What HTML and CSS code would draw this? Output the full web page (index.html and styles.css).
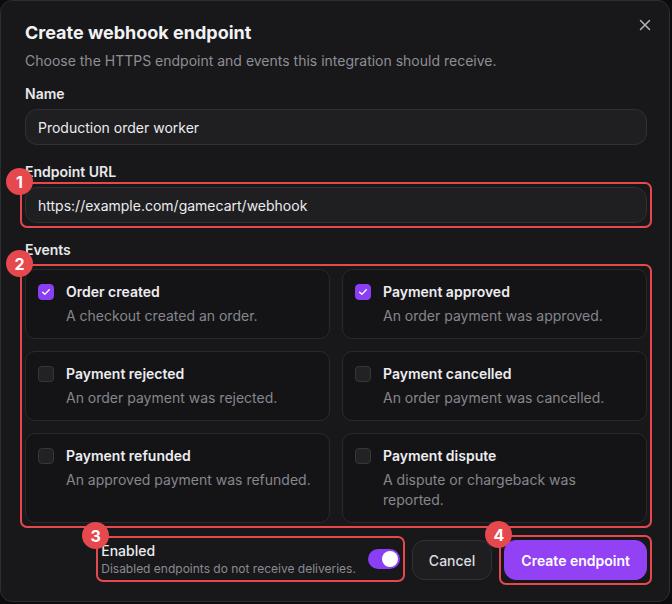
FILE: index.html
```html
<!DOCTYPE html>
<html lang="en">
<head>
<meta charset="utf-8">
<title>Create webhook endpoint</title>
<link rel="stylesheet" href="styles.css">
</head>
<body>
<div class="modal">
  <button class="close" aria-label="Close">
    <svg width="12" height="12" viewBox="0 0 12 12"><path d="M1.5 1.5l9 9M10.5 1.5l-9 9" stroke="#b4b4ba" stroke-width="1.5" stroke-linecap="round" fill="none"/></svg>
  </button>
  <header class="head">
    <h1 class="title">Create webhook endpoint</h1>
    <p class="subtitle">Choose the HTTPS endpoint and events this integration should receive.</p>
  </header>

  <div class="field">
    <div class="label">Name</div>
    <div class="input">Production order worker</div>
  </div>

  <div class="field">
    <div class="label">Endpoint URL</div>
    <div class="annot">
      <div class="input">https://example.com/gamecart/webhook</div>
      <span class="badge">1</span>
    </div>
  </div>

  <div class="events">
    <div class="label label-events">Events</div>
    <div class="annot">
      <div class="grid">
        <div class="card">
          <span class="check on"><svg width="16" height="16" viewBox="0 0 16 16"><path d="M4.2 8.3l2.5 2.4 5-5.2" stroke="#fff" stroke-width="1.6" fill="none" stroke-linecap="round" stroke-linejoin="round"/></svg></span>
          <div class="card-text"><div class="card-title">Order created</div><div class="card-desc">A checkout created an order.</div></div>
        </div>
        <div class="card">
          <span class="check on"><svg width="16" height="16" viewBox="0 0 16 16"><path d="M4.2 8.3l2.5 2.4 5-5.2" stroke="#fff" stroke-width="1.6" fill="none" stroke-linecap="round" stroke-linejoin="round"/></svg></span>
          <div class="card-text"><div class="card-title">Payment approved</div><div class="card-desc">An order payment was approved.</div></div>
        </div>
        <div class="card">
          <span class="check"></span>
          <div class="card-text"><div class="card-title">Payment rejected</div><div class="card-desc">An order payment was rejected.</div></div>
        </div>
        <div class="card">
          <span class="check"></span>
          <div class="card-text"><div class="card-title">Payment cancelled</div><div class="card-desc">An order payment was cancelled.</div></div>
        </div>
        <div class="card">
          <span class="check"></span>
          <div class="card-text"><div class="card-title">Payment refunded</div><div class="card-desc">An approved payment was refunded.</div></div>
        </div>
        <div class="card">
          <span class="check"></span>
          <div class="card-text"><div class="card-title">Payment dispute</div><div class="card-desc">A dispute or chargeback was reported.</div></div>
        </div>
      </div>
      <span class="badge">2</span>
    </div>
  </div>

  <footer class="footer">
    <div class="annot annot-enabled">
      <div class="enabled">
        <div class="enabled-text">
          <div class="enabled-title">Enabled</div>
          <div class="enabled-desc">Disabled endpoints do not receive deliveries.</div>
        </div>
        <span class="toggle"><span class="knob"></span></span>
      </div>
      <span class="badge">3</span>
    </div>
    <button class="btn btn-secondary">Cancel</button>
    <div class="annot">
      <button class="btn btn-primary">Create endpoint</button>
      <span class="badge">4</span>
    </div>
  </footer>
</div>
</body>
</html>
```

FILE: styles.css
```css
* { box-sizing: border-box; }

body {
  margin: 0;
  background: #0c0c0e;
  font-family: Inter, "Noto Sans", "Liberation Sans", sans-serif;
  color: #ececef;
}

.modal {
  position: relative;
  width: 670px;
  height: 602px;
  background: #18181b;
  border: 1px solid #2c2c31;
  border-radius: 12px;
  padding: 18px 22px 0 24px;
}

.close {
  position: absolute;
  top: 12px;
  right: 12px;
  width: 24px;
  height: 24px;
  border: 0;
  background: transparent;
  padding: 0;
  display: flex;
  align-items: center;
  justify-content: center;
}

.head { margin-bottom: 13px; }

.title {
  margin: 0 0 4px;
  font-size: 18px;
  line-height: 28px;
  font-weight: 700;
  color: #f2f2f4;
}

.subtitle {
  margin: 0;
  font-size: 14px;
  line-height: 20px;
  color: #8e8e95;
}

.field { margin-bottom: 17px; }

.label {
  font-size: 14px;
  line-height: 20px;
  font-weight: 600;
  color: #e9e9ec;
  margin-bottom: 5px;
}

.label-events { margin-bottom: 9px; }

.input {
  height: 36px;
  display: flex;
  align-items: center;
  padding: 0 12px;
  background: #1f1f22;
  border: 1px solid #303035;
  border-radius: 12px;
  font-size: 14px;
  color: #ececef;
}

.annot { position: relative; }

.annot::after {
  content: "";
  position: absolute;
  inset: -5px;
  border: 2px solid #e5484d;
  border-radius: 7px;
  pointer-events: none;
}

.badge {
  position: absolute;
  left: -19px;
  top: -19px;
  width: 27px;
  height: 27px;
  border-radius: 50%;
  background: #e5484d;
  color: #fff;
  font-size: 16px;
  font-weight: 700;
  display: flex;
  align-items: center;
  justify-content: center;
  z-index: 2;
}

.grid {
  display: grid;
  grid-template-columns: 1fr 1fr;
  gap: 12px;
}

.card {
  display: flex;
  gap: 12px;
  align-items: flex-start;
  padding: 12px;
  background: #141417;
  border: 1px solid #2a2a2e;
  border-radius: 10px;
}

.check {
  flex: none;
  width: 16px;
  height: 16px;
  margin-top: 2px;
  border-radius: 4px;
  background: #222225;
  border: 1px solid #36363b;
  display: flex;
  align-items: center;
  justify-content: center;
}

.check.on {
  background: #8b3ff5;
  border-color: #8b3ff5;
}

.card-title {
  font-size: 14px;
  line-height: 20px;
  font-weight: 600;
  color: #ededf0;
}

.card-desc {
  margin-top: 4px;
  font-size: 14px;
  line-height: 20px;
  color: #86868d;
}

.footer {
  margin-top: 17px;
  display: flex;
  justify-content: flex-end;
  align-items: center;
  gap: 12px;
}

.annot-enabled { margin-top: -2px; }

.enabled {
  display: flex;
  align-items: center;
  gap: 12px;
}

.enabled-title {
  font-size: 14px;
  line-height: 20px;
  font-weight: 500;
  color: #ececef;
}

.enabled-desc {
  font-size: 12px;
  line-height: 16px;
  color: #8a8a91;
}

.toggle {
  position: relative;
  width: 32px;
  height: 20px;
  border-radius: 10px;
  background: #8b3ff5;
}

.knob {
  position: absolute;
  right: 2px;
  top: 2px;
  width: 16px;
  height: 16px;
  border-radius: 50%;
  background: #fff;
}

.btn {
  height: 40px;
  padding: 0 16px;
  border-radius: 12px;
  font-family: inherit;
  font-size: 14px;
  display: flex;
  align-items: center;
}

.btn-secondary {
  background: #1e1e21;
  border: 1px solid #303035;
  color: #dcdce0;
  font-weight: 500;
}

.btn-primary {
  background: #9341f5;
  border: 1px solid #9341f5;
  color: #fff;
  font-weight: 600;
}
```
